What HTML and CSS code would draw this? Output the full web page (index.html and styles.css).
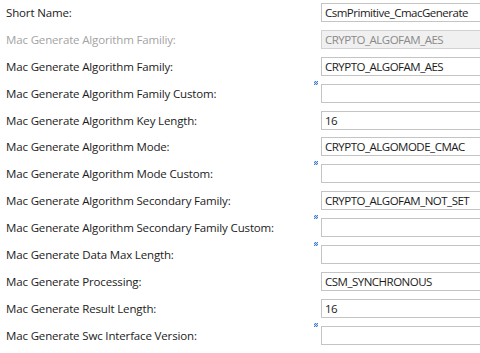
FILE: index.html
```html
<!DOCTYPE html>
<html>
<head>
<meta charset="utf-8">
<link rel="stylesheet" href="styles.css">
</head>
<body>
<div class="form">
  <div class="label">Short Name:</div>
  <div class="cell"><div class="field">CsmPrimitive_CmacGenerate</div></div>

  <div class="label disabled">Mac Generate Algorithm Familiy:</div>
  <div class="cell"><div class="field ro">CRYPTO_ALGOFAM_AES</div></div>

  <div class="label">Mac Generate Algorithm Family:</div>
  <div class="cell"><div class="field">CRYPTO_ALGOFAM_AES</div></div>

  <div class="label">Mac Generate Algorithm Family Custom:</div>
  <div class="cell"><span class="deco"></span><div class="field"></div></div>

  <div class="label">Mac Generate Algorithm Key Length:</div>
  <div class="cell"><div class="field">16</div></div>

  <div class="label">Mac Generate Algorithm Mode:</div>
  <div class="cell"><div class="field">CRYPTO_ALGOMODE_CMAC</div></div>

  <div class="label">Mac Generate Algorithm Mode Custom:</div>
  <div class="cell"><span class="deco"></span><div class="field"></div></div>

  <div class="label">Mac Generate Algorithm Secondary Family:</div>
  <div class="cell"><div class="field">CRYPTO_ALGOFAM_NOT_SET</div></div>

  <div class="label">Mac Generate Algorithm Secondary Family Custom:</div>
  <div class="cell"><span class="deco"></span><div class="field"></div></div>

  <div class="label">Mac Generate Data Max Length:</div>
  <div class="cell"><span class="deco"></span><div class="field"></div></div>

  <div class="label">Mac Generate Processing:</div>
  <div class="cell"><div class="field">CSM_SYNCHRONOUS</div></div>

  <div class="label">Mac Generate Result Length:</div>
  <div class="cell"><div class="field">16</div></div>

  <div class="label">Mac Generate Swc Interface Version:</div>
  <div class="cell"><span class="deco"></span><div class="field"></div></div>
</div>
</body>
</html>
```
FILE: styles.css
```css
html, body {
  margin: 0;
  padding: 0;
  background: #ffffff;
  overflow: hidden;
  width: 480px;
  height: 353px;
}
.form {
  display: grid;
  grid-template-columns: 321px 180px;
  grid-auto-rows: 26.9px;
  padding-top: 3px;
  font-family: "Open Sans", "Noto Sans", sans-serif;
  font-size: 11.5px;
  color: #1b1b1b;
}
.label {
  padding-left: 6px;
  height: 19px;
  line-height: 19px;
  white-space: nowrap;
  letter-spacing: -0.15px;
}
.label.disabled {
  color: #a3a3a3;
}
.cell {
  position: relative;
}
.field {
  box-sizing: border-box;
  height: 19px;
  border: 1px solid #c4c4c4;
  border-right: none;
  background: #ffffff;
  padding-left: 3px;
  line-height: 17px;
  white-space: nowrap;
  letter-spacing: -0.5px;
  color: #1b1b1b;
}
.field.ro {
  background: #f0f0f0;
  border-color: #d2d2d2;
  color: #8a8a8a;
}
.deco {
  position: absolute;
  left: -7px;
  top: -3px;
  width: 4px;
  height: 4px;
  background: repeating-conic-gradient(#4a7fd0 0 25%, #c8dbf4 0 50%);
  background-size: 2px 2px;
}
```
